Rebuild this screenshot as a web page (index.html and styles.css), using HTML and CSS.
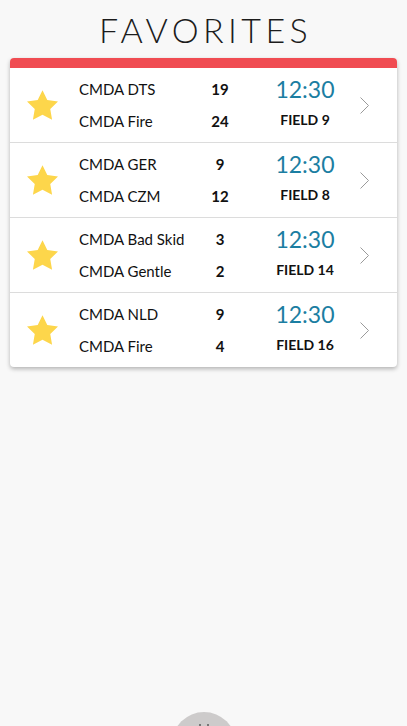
FILE: index.html
```html
<!DOCTYPE html>
<html>
<head>
<meta charset="utf-8">
<link rel="stylesheet" href="styles.css">
</head>
<body>
<h1 class="title">FAVORITES</h1>
<div class="card">
  <div class="card-top"></div>
  <div class="match">
    <div class="star"><svg viewBox="2 2 20 19.1" width="31" height="30"><path d="M12 2l3.09 6.26L22 9.27l-5 4.87 1.18 6.88L12 17.77l-6.18 3.25L7 14.14 2 9.27l6.91-1.01L12 2z"/></svg></div>
    <div class="teams"><div>CMDA DTS</div><div>CMDA Fire</div></div>
    <div class="scores"><div>19</div><div>24</div></div>
    <div class="info"><div class="time">12:30</div><div class="field">FIELD 9</div></div>
    <div class="chev"><svg viewBox="0 0 9 17" width="9" height="17"><polyline points="0.5,0.5 8.5,8.5 0.5,16.5"/></svg></div>
  </div>
  <div class="match">
    <div class="star"><svg viewBox="2 2 20 19.1" width="31" height="30"><path d="M12 2l3.09 6.26L22 9.27l-5 4.87 1.18 6.88L12 17.77l-6.18 3.25L7 14.14 2 9.27l6.91-1.01L12 2z"/></svg></div>
    <div class="teams"><div>CMDA GER</div><div>CMDA CZM</div></div>
    <div class="scores"><div>9</div><div>12</div></div>
    <div class="info"><div class="time">12:30</div><div class="field">FIELD 8</div></div>
    <div class="chev"><svg viewBox="0 0 9 17" width="9" height="17"><polyline points="0.5,0.5 8.5,8.5 0.5,16.5"/></svg></div>
  </div>
  <div class="match">
    <div class="star"><svg viewBox="2 2 20 19.1" width="31" height="30"><path d="M12 2l3.09 6.26L22 9.27l-5 4.87 1.18 6.88L12 17.77l-6.18 3.25L7 14.14 2 9.27l6.91-1.01L12 2z"/></svg></div>
    <div class="teams"><div>CMDA Bad Skid</div><div>CMDA Gentle</div></div>
    <div class="scores"><div>3</div><div>2</div></div>
    <div class="info"><div class="time">12:30</div><div class="field">FIELD 14</div></div>
    <div class="chev"><svg viewBox="0 0 9 17" width="9" height="17"><polyline points="0.5,0.5 8.5,8.5 0.5,16.5"/></svg></div>
  </div>
  <div class="match">
    <div class="star"><svg viewBox="2 2 20 19.1" width="31" height="30"><path d="M12 2l3.09 6.26L22 9.27l-5 4.87 1.18 6.88L12 17.77l-6.18 3.25L7 14.14 2 9.27l6.91-1.01L12 2z"/></svg></div>
    <div class="teams"><div>CMDA NLD</div><div>CMDA Fire</div></div>
    <div class="scores"><div>9</div><div>4</div></div>
    <div class="info"><div class="time">12:30</div><div class="field">FIELD 16</div></div>
    <div class="chev"><svg viewBox="0 0 9 17" width="9" height="17"><polyline points="0.5,0.5 8.5,8.5 0.5,16.5"/></svg></div>
  </div>
</div>
<div class="fab"><span class="fab-icon"></span></div>
</body>
</html>
```
FILE: styles.css
```css
html, body {
  margin: 0;
  padding: 0;
  background: #f8f8f8;
  font-family: Lato, "Open Sans", sans-serif;
  color: #111;
  height: 100%;
  overflow: hidden;
}
.title {
  margin: 0 0 9px;
  padding: 10px 0 0 4px;
  height: 49px;
  box-sizing: border-box;
  text-align: center;
  font-weight: 300;
  font-size: 34px;
  line-height: 40px;
  letter-spacing: 4.4px;
  color: #1c1c1c;
}
.card {
  margin: 0 10px;
  background: #fff;
  border-radius: 4px;
  box-shadow: 0 2px 4px rgba(0,0,0,0.28);
  overflow: hidden;
}
.card-top {
  height: 10px;
  background: #f04c52;
}
.match {
  display: grid;
  grid-template-columns: 69px 111px 60px 110px 9px 1fr;
  height: 75px;
  box-sizing: border-box;
  border-bottom: 1px solid #dcdcdc;
  padding-top: 4px;
}
.match:last-child {
  border-bottom: none;
  height: 74px;
}
.star {
  align-self: center;
  margin-top: -4px;
  padding-left: 17px;
  display: flex;
}
.star svg { fill: #fdd64b; }
.teams {
  font-size: 15px;
  line-height: 32px;
  white-space: nowrap;
  padding-top: 0.5px;
}
.scores {
  font-size: 15px;
  font-weight: 700;
  line-height: 32px;
  text-align: center;
  padding-top: 0.5px;
}
.info {
  text-align: center;
}
.time {
  font-size: 23px;
  line-height: 34px;
  color: #1b7ea2;
}
.field {
  font-size: 14px;
  font-weight: 700;
  line-height: 28px;
}
.chev {
  align-self: center;
  margin-top: -4px;
  display: flex;
}
.chev svg {
  fill: none;
  stroke: #9a9a9a;
  stroke-width: 1;
}
.fab {
  position: fixed;
  left: 172px;
  top: 712px;
  width: 64px;
  height: 64px;
  border-radius: 50%;
  background: #cdcbcb;
}
.fab-icon {
  position: absolute;
  left: 27px;
  top: 12px;
  width: 10px;
  height: 10px;
  border-left: 2px solid #777;
  border-right: 2px solid #777;
  box-sizing: border-box;
}
```
